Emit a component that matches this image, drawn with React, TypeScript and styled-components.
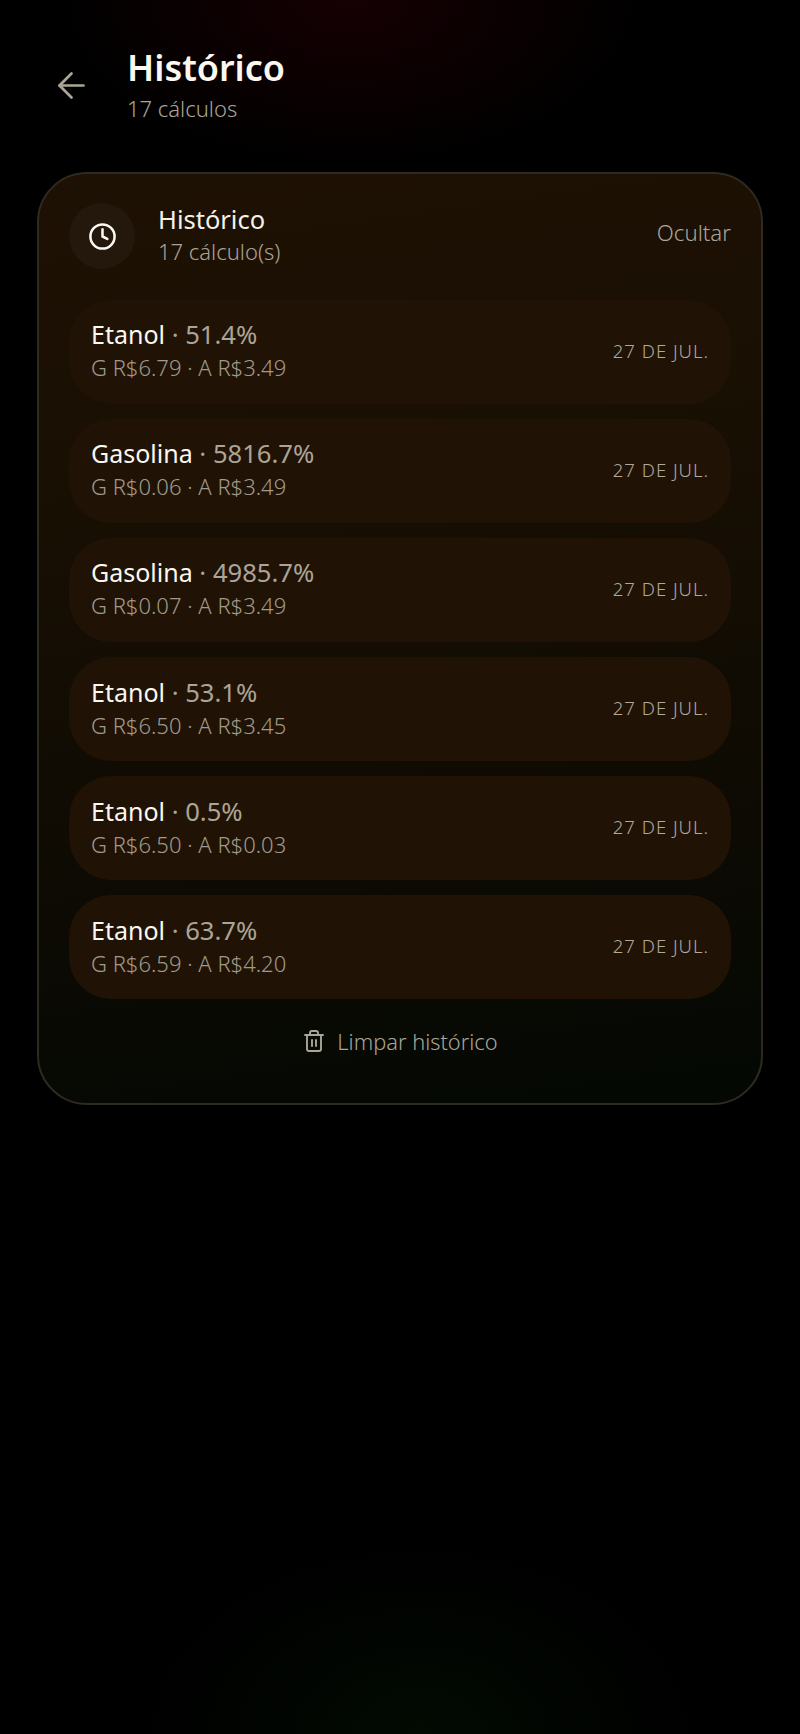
import React from 'react';
import styled, { createGlobalStyle } from 'styled-components';
import { ArrowLeft, Clock, Trash2 } from 'lucide-react';

const GlobalStyle = createGlobalStyle`
  html, body {
    margin: 0;
    padding: 0;
    background: #000;
  }
  body {
    font-family: "Noto Sans", "Open Sans", sans-serif;
  }
`;

const Page = styled.div`
  box-sizing: border-box;
  width: 800px;
  height: 1734px;
  overflow: hidden;
  padding: 46px 37px 0;
  background:
    radial-gradient(ellipse 300px 170px at 350px 0, #160003 0%, rgba(22, 0, 3, 0) 100%),
    radial-gradient(ellipse 280px 190px at 420px 1734px, #020a02 0%, rgba(2, 10, 2, 0) 100%),
    #000;
`;

const Header = styled.header`
  display: flex;
  align-items: center;
  height: 80px;
  margin-bottom: 46px;
`;

const BackButton = styled.div`
  display: flex;
  box-sizing: border-box;
  width: 90px;
  padding: 0 0 2px 14px;
  color: #aaa595;
`;

const Heading = styled.div`
  display: flex;
  flex-direction: column;
`;

const PageTitle = styled.div`
  font-size: 36px;
  line-height: 44px;
  font-weight: 600;
  color: #fbf8f2;
`;

const PageSub = styled.div`
  font-size: 22px;
  line-height: 36px;
  font-weight: 300;
  color: #aaa598;
`;

const Card = styled.section`
  box-sizing: border-box;
  width: 726px;
  height: 933px;
  padding: 29px 30px 0;
  border: 2px solid #2f2a20;
  border-radius: 50px;
  background: linear-gradient(172deg, #1e1104 0%, #180f03 35%, #0c0a03 75%, #030803 100%);
`;

const CardHeader = styled.div`
  display: flex;
  align-items: center;
  height: 66px;
  margin-bottom: 30.5px;
`;

const IconCircle = styled.div`
  display: flex;
  align-items: center;
  justify-content: center;
  flex-shrink: 0;
  width: 66px;
  height: 66px;
  border-radius: 50%;
  margin-right: 23px;
  background: #24170b;
  color: #fbf8f2;
`;

const CardTitles = styled.div`
  flex: 1;
  padding-bottom: 3px;
`;

const CardTitle = styled.div`
  font-size: 25.5px;
  line-height: 32px;
  color: #f5f1e9;
`;

const CardSub = styled.div`
  font-size: 22px;
  line-height: 32px;
  font-weight: 300;
  color: #a9a296;
`;

const HideLink = styled.div`
  align-self: flex-start;
  margin-top: 15px;
  font-size: 22.2px;
  line-height: 30px;
  font-weight: 300;
  color: #aaa598;
`;

const List = styled.div`
  display: flex;
  flex-direction: column;
  gap: 15.2px;
`;

const Row = styled.div`
  display: flex;
  align-items: center;
  justify-content: space-between;
  box-sizing: border-box;
  height: 104px;
  padding: 0 22px 3px;
  border-radius: 42px;
  background: #201305;
`;

const RowText = styled.div`
  padding-top: 2px;
`;

const RowTitle = styled.div`
  font-size: 25.6px;
  line-height: 32px;
  color: #aca597;
`;

const Fuel = styled.span`
  font-size: 25px;
  color: #fbf8f2;
`;

const RowSub = styled.div`
  font-size: 22px;
  line-height: 33px;
  font-weight: 300;
  color: #a09a8c;
`;

const RowDate = styled.div`
  font-size: 18.5px;
  font-weight: 300;
  letter-spacing: 1px;
  color: #b0aa9c;
`;

const ClearButton = styled.div`
  display: flex;
  align-items: center;
  justify-content: center;
  gap: 11px;
  margin-top: 26px;
  height: 32px;
  font-size: 21.8px;
  font-weight: 300;
  color: #aaa598;
`;

const rows = [
  { fuel: 'Etanol', pct: '51.4%', g: '6.79', a: '3.49' },
  { fuel: 'Gasolina', pct: '5816.7%', g: '0.06', a: '3.49' },
  { fuel: 'Gasolina', pct: '4985.7%', g: '0.07', a: '3.49' },
  { fuel: 'Etanol', pct: '53.1%', g: '6.50', a: '3.45' },
  { fuel: 'Etanol', pct: '0.5%', g: '6.50', a: '0.03' },
  { fuel: 'Etanol', pct: '63.7%', g: '6.59', a: '4.20' },
];

const App: React.FC = () => {
  return (
    <Page>
      <GlobalStyle />
      <Header>
        <BackButton>
          <ArrowLeft size={41} strokeWidth={1.6} />
        </BackButton>
        <Heading>
          <PageTitle>Histórico</PageTitle>
          <PageSub>17 cálculos</PageSub>
        </Heading>
      </Header>
      <Card>
        <CardHeader>
          <IconCircle>
            <Clock size={29} strokeWidth={2.1} />
          </IconCircle>
          <CardTitles>
            <CardTitle>Histórico</CardTitle>
            <CardSub>17 cálculo(s)</CardSub>
          </CardTitles>
          <HideLink>Ocultar</HideLink>
        </CardHeader>
        <List>
          {rows.map((row, index) => (
            <Row key={index}>
              <RowText>
                <RowTitle>
                  <Fuel>{row.fuel}</Fuel> · {row.pct}
                </RowTitle>
                <RowSub>G R${row.g} · A R${row.a}</RowSub>
              </RowText>
              <RowDate>27 DE JUL.</RowDate>
            </Row>
          ))}
        </List>
        <ClearButton>
          <Trash2 size={24} strokeWidth={1.9} />
          Limpar histórico
        </ClearButton>
      </Card>
    </Page>
  );
};

export default App;
